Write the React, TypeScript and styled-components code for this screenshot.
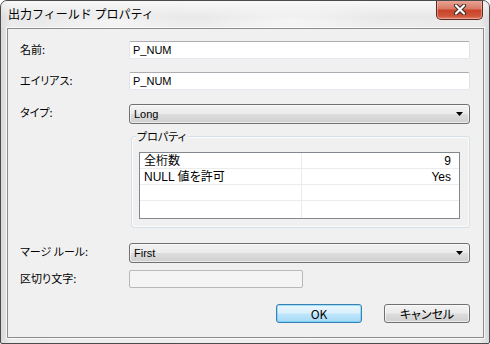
import styled, { createGlobalStyle } from "styled-components";

const GlobalStyle = createGlobalStyle`
    html, body {
        margin: 0;
        padding: 0;
        background: #ffffff;
    }
    * {
        box-sizing: border-box;
    }
`

const uiFont = `"Liberation Sans", "Noto Sans CJK JP", sans-serif`

type PropRow = {
    name: string
    value: string
}

const properties: PropRow[] = [
    {name: '全桁数', value: '9'},
    {name: 'NULL 値を許可', value: 'Yes'},
    {name: '', value: ''},
    {name: '', value: ''},
]

const CloseIcon = () => (
    <svg width="14" height="11" viewBox="0 0 14 11">
        <path d="M3 1.5 L11 9.5 M11 1.5 L3 9.5" stroke="#3a2a28" strokeWidth="4.2" strokeLinecap="round"/>
        <path d="M3 1.5 L11 9.5 M11 1.5 L3 9.5" stroke="#ffffff" strokeWidth="2.2" strokeLinecap="round"/>
    </svg>
)

const Arrow = () => (
    <svg width="7" height="4" viewBox="0 0 7 4">
        <path d="M0 0 H7 L3.5 4 Z" fill="#000"/>
    </svg>
)

export default function App() {
    return (
        <>
            <GlobalStyle/>
            <Window>
                <TitleBar>
                    <Title>出力フィールド プロパティ</Title>
                    <CloseButton><CloseIcon/></CloseButton>
                </TitleBar>
                <Client>
                    <Form>
                        <Label $top={12}>名前:</Label>
                        <TextInput $top={12}>P_NUM</TextInput>

                        <Label $top={13}>エイリアス:</Label>
                        <TextInput $top={13}>P_NUM</TextInput>

                        <Label $top={14}>タイプ:</Label>
                        <Select $top={14}>
                            <span>Long</span>
                            <Arrow/>
                        </Select>

                        <GroupBox>
                            <Legend>プロパティ</Legend>
                            <Grid>
                                {properties.map((p, i) => (
                                    <GridRow key={i} $last={i === properties.length - 1}>
                                        <NameCell>{p.name}</NameCell>
                                        <ValueCell>{p.value}</ValueCell>
                                    </GridRow>
                                ))}
                            </Grid>
                        </GroupBox>

                        <Label $top={15}>マージ ルール:</Label>
                        <Select $top={15}>
                            <span>First</span>
                            <Arrow/>
                        </Select>

                        <Label $top={7}>区切り文字:</Label>
                        <DisabledInput $top={7}/>

                        <ButtonRow>
                            <Button $primary>OK</Button>
                            <Button>キャンセル</Button>
                        </ButtonRow>
                    </Form>
                </Client>
            </Window>
        </>
    )
}

const Window = styled.div`
    width: 490px;
    height: 344px;
    display: flex;
    flex-direction: column;
    border: 1px solid #4b4b4b;
    border-radius: 7px 7px 2px 2px;
    overflow: hidden;
    background:
        radial-gradient(ellipse 90px 14px at 290px 18px, rgba(255, 255, 255, 0.95), rgba(255, 255, 255, 0)),
        radial-gradient(ellipse 70px 12px at 110px 20px, rgba(255, 255, 255, 0.8), rgba(255, 255, 255, 0)),
        linear-gradient(90deg, #d9d9d9 0%, #ececec 2%, #efefef 50%, #ececec 98%, #d9d9d9 100%);
    font-family: ${uiFont};
`

const TitleBar = styled.div`
    height: 27px;
    display: flex;
    align-items: flex-start;
    padding-left: 7px;
    background: linear-gradient(180deg, rgba(255, 255, 255, 0.6) 0%, rgba(225, 225, 225, 0.4) 60%, rgba(240, 240, 240, 0.2) 100%);
`

const Title = styled.div`
    margin-top: 5px;
    font-family: "Noto Sans CJK JP", sans-serif;
    font-size: 12px;
    line-height: 16px;
    color: #000;
`

const CloseButton = styled.div`
    margin-left: auto;
    margin-right: 6px;
    margin-top: -1px;
    width: 47px;
    height: 20px;
    display: flex;
    align-items: center;
    justify-content: center;
    border: 1px solid #5b2a22;
    border-top: none;
    border-radius: 0 0 5px 5px;
    background: linear-gradient(180deg, #e9a99b 0%, #d97a66 45%, #c9442a 55%, #d0553a 85%, #e0836e 100%);
    box-shadow: inset 0 0 0 1px rgba(255, 210, 200, 0.45);
`

const Client = styled.div`
    flex: 1;
    margin: 0 5px 5px 6px;
    border: 1px solid #8c8c8c;
    background: #f0f0f0;
    box-shadow: 0 0 0 1px rgba(255, 255, 255, 0.7);
`

const Form = styled.div`
    display: grid;
    grid-template-columns: 109px 1fr;
    align-items: start;
    padding: 0 13px 0 12px;
`

const Label = styled.div<{ $top: number }>`
    margin-top: ${p => p.$top + 1}px;
    font-family: "Noto Sans CJK JP", sans-serif;
    font-feature-settings: "palt";
    font-size: 11px;
    line-height: 14px;
    color: #000;
`

const TextInput = styled.div<{ $top: number }>`
    margin-top: ${p => p.$top}px;
    height: 18px;
    padding: 0 3px;
    display: flex;
    align-items: center;
    background: #fff;
    border: 1px solid #e2e3ea;
    border-top-color: #abadb3;
    border-bottom-color: #e3e9ef;
    border-radius: 2px;
    font-size: 11px;
    color: #000;
`

const DisabledInput = styled.div<{ $top: number }>`
    margin-top: ${p => p.$top}px;
    width: 174px;
    height: 18px;
    background: #f4f4f4;
    border: 1px solid #b8b8b8;
    border-radius: 2px;
`

const Select = styled.div<{ $top: number }>`
    margin-top: ${p => p.$top}px;
    height: 20px;
    padding: 0 6px 0 4px;
    display: flex;
    align-items: center;
    justify-content: space-between;
    border: 1px solid #707070;
    border-radius: 3px;
    background: linear-gradient(180deg, #f2f2f2 0%, #ebebeb 48%, #dddddd 52%, #cfcfcf 100%);
    box-shadow: inset 0 0 0 1px rgba(255, 255, 255, 0.6);
    font-size: 11px;
    color: #000;
`

const GroupBox = styled.div`
    grid-column: 2;
    position: relative;
    margin: 12px 0 0 2px;
    padding: 15px 9px 8px 7px;
    border: 1px solid #d5dfe5;
    border-radius: 3px;
    box-shadow: inset 0 0 0 1px rgba(255, 255, 255, 0.8);
`

const Legend = styled.span`
    position: absolute;
    top: -8px;
    left: 4px;
    padding: 0 2px 0 1px;
    background: #f0f0f0;
    font-family: "Noto Sans CJK JP", sans-serif;
    font-feature-settings: "palt";
    font-size: 11px;
    line-height: 14px;
    color: #000;
`

const Grid = styled.div`
    border: 1px solid #828790;
    background: #fff;
`

const GridRow = styled.div<{ $last?: boolean }>`
    display: grid;
    grid-template-columns: 162px 1fr;
    height: ${p => p.$last ? 17 : 16}px;
    border-bottom: ${p => p.$last ? 'none' : '1px solid #ececec'};
`

const NameCell = styled.div`
    padding-left: 4px;
    border-right: 1px solid #ececec;
    font-family: ${uiFont};
    font-feature-settings: "palt";
    font-size: 12px;
    line-height: 16px;
    color: #000;
`

const ValueCell = styled.div`
    padding-right: 8px;
    text-align: right;
    font-size: 12px;
    line-height: 16px;
    color: #000;
`

const ButtonRow = styled.div`
    grid-column: 1 / span 2;
    margin-top: 16px;
    display: flex;
    justify-content: flex-end;
    gap: 22px;
`

const Button = styled.div<{ $primary?: boolean }>`
    width: 86px;
    height: 19px;
    display: flex;
    align-items: center;
    justify-content: center;
    border: 1px solid ${p => p.$primary ? '#3c7fb1' : '#707070'};
    border-radius: 3px;
    background: ${p => p.$primary
        ? 'linear-gradient(180deg, #eaf6fd 0%, #d9f0fc 48%, #bee6fd 52%, #a7d9f5 100%)'
        : 'linear-gradient(180deg, #f2f2f2 0%, #ebebeb 48%, #dddddd 52%, #cfcfcf 100%)'};
    box-shadow: inset 0 0 0 1px ${p => p.$primary ? 'rgba(80, 200, 250, 0.5)' : 'rgba(255, 255, 255, 0.6)'};
    font-family: "Noto Sans CJK JP", sans-serif;
    font-feature-settings: "palt";
    font-size: 12px;
    color: #000;
`
